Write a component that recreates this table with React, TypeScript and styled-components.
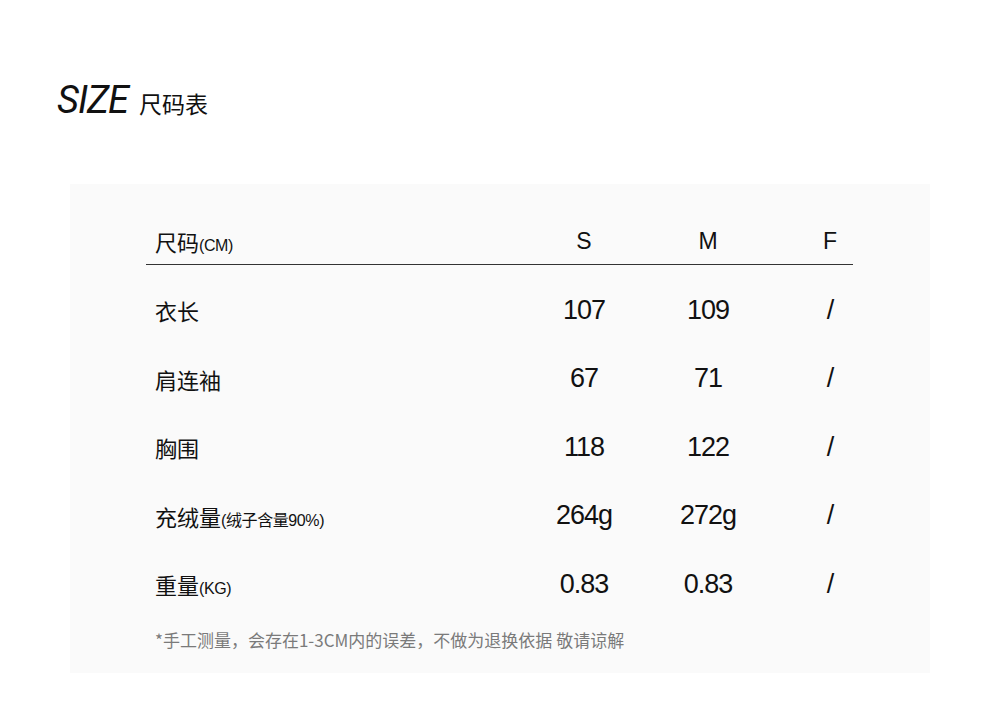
import React from 'react'
import styled, { createGlobalStyle } from 'styled-components'

const GlobalStyle = createGlobalStyle`
  html, body {
    margin: 0;
    padding: 0;
    background: #ffffff;
  }
  body {
    font-family: 'Liberation Sans', 'Noto Sans CJK SC', sans-serif;
    color: #111111;
  }
`

const rows = [
  { label: '衣长', note: '', s: '107', m: '109', f: '/' },
  { label: '肩连袖', note: '', s: '67', m: '71', f: '/' },
  { label: '胸围', note: '', s: '118', m: '122', f: '/' },
  { label: '充绒量', note: '(绒子含量90%)', s: '264g', m: '272g', f: '/' },
  { label: '重量', note: '(KG)', s: '0.83', m: '0.83', f: '/' },
]

const App: React.FC = () => {
  return (
    <Page>
      <GlobalStyle />
      <Title>
        <TitleLatin>SIZE</TitleLatin>
        <TitleCjk>尺码表</TitleCjk>
      </Title>
      <Panel>
        <Table>
          <HeadRow>
            <Label>
              尺码<Note>(CM)</Note>
            </Label>
            <HeadCell>S</HeadCell>
            <HeadCell>M</HeadCell>
            <HeadCell>F</HeadCell>
          </HeadRow>
          <Divider />
          <Body>
            {rows.map((r) => (
              <Row key={r.label}>
                <Label>
                  {r.label}
                  {r.note && <Note>{r.note}</Note>}
                </Label>
                <Cell>{r.s}</Cell>
                <Cell>{r.m}</Cell>
                <Cell>{r.f}</Cell>
              </Row>
            ))}
          </Body>
          <Footnote>*手工测量，会存在1-3CM内的误差，不做为退换依据 敬请谅解</Footnote>
        </Table>
      </Panel>
    </Page>
  )
}

const Page = styled('div')`
  width: 1000px;
  height: 719px;
  box-sizing: border-box;
  padding: 78px 70px 0 70px;
`

const Title = styled('div')`
  display: flex;
  align-items: baseline;
  gap: 11px;
  margin-left: -13px;
  height: 106px;
`

const TitleLatin = styled('span')`
  font-family: 'Roboto', 'Liberation Sans', sans-serif;
  font-style: italic;
  font-weight: 400;
  font-size: 38px;
  letter-spacing: -1px;
  color: #111;
`

const TitleCjk = styled('span')`
  font-family: 'Noto Sans CJK SC', sans-serif;
  font-size: 23px;
  color: #111;
`

const Panel = styled('div')`
  width: 860px;
  height: 489px;
  background: #fafafa;
  box-sizing: border-box;
  padding: 34px 0 0 76px;
`

const Table = styled('div')`
  width: 744px;
`

const grid = `
  display: grid;
  grid-template-columns: 376px 124px 124px 120px;
  align-items: center;
`

const HeadRow = styled('div')`
  ${grid}
  height: 46px;
`

const Divider = styled('div')`
  width: 707px;
  height: 1px;
  background: #333333;
`

const Body = styled('div')`
  padding-top: 11px;
`

const Row = styled('div')`
  ${grid}
  height: 68.5px;
`

const Label = styled('div')`
  padding-left: 9px;
  font-family: 'Noto Sans CJK SC', sans-serif;
  font-size: 22px;
  display: flex;
  align-items: baseline;
  white-space: nowrap;
`

const Note = styled('span')`
  font-family: 'Liberation Sans', 'Noto Sans CJK SC', sans-serif;
  font-size: 16px;
  letter-spacing: -0.4px;
`

const HeadCell = styled('div')`
  text-align: center;
  font-size: 23px;
`

const Cell = styled('div')`
  text-align: center;
  font-size: 27px;
  letter-spacing: -1px;
`

const Footnote = styled('div')`
  margin-top: 8px;
  padding-left: 9px;
  font-family: 'Noto Sans CJK SC', sans-serif;
  font-size: 17px;
  color: #7a7a7a;
`

export default App
